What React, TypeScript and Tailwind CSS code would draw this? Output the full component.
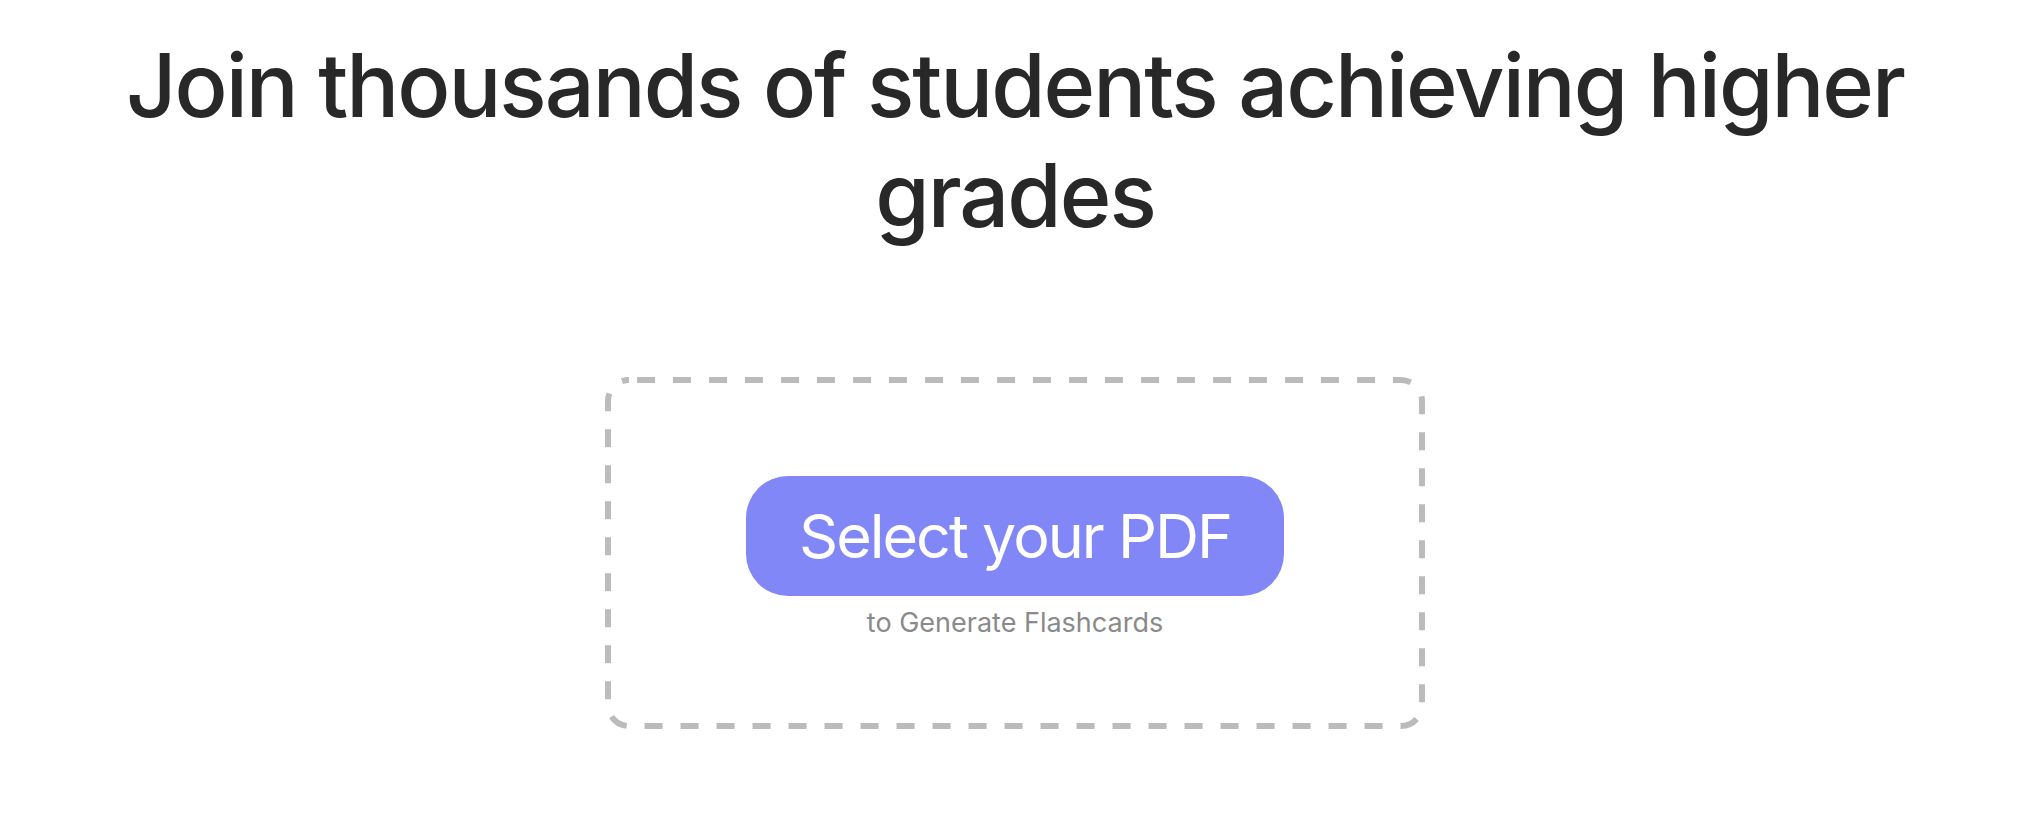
import React from 'react';

export default function App() {
  return (
    <div className="min-h-screen w-full bg-white flex flex-col items-center" style={{ fontFamily: 'Inter, "Noto Sans", sans-serif' }}>
      <h1 className="pt-[30px] px-10 text-center text-[88px] leading-[110px] font-medium text-[#282828] tracking-[-2px]">
        Join thousands of students achieving higher grades
      </h1>

      <div className="relative mt-[127px] w-[820px] h-[352px] flex flex-col items-center pt-[99px]">
        <svg className="absolute inset-0 w-full h-full pointer-events-none" viewBox="0 0 820 352" fill="none">
          <rect x="3" y="3" width="814" height="346" rx="21" stroke="#bbbbbb" strokeWidth="6" strokeDasharray="18 18" strokeDashoffset="28" />
        </svg>
        <button className="h-[120px] w-[538px] rounded-[42px] bg-[#8187f6] text-white text-[61px] leading-none font-normal tracking-[-2px]">
          Select your PDF
        </button>
        <p className="mt-[10px] text-[27px] leading-[34px] text-[#8a8a8a]">to Generate Flashcards</p>
      </div>
    </div>
  );
}
